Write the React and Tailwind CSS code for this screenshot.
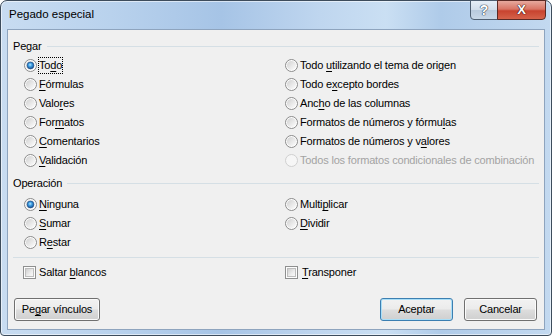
import React from "react";

function Defs() {
  return (
    <svg width="0" height="0" className="block">
      <defs>
        <linearGradient id="rgi" x1="0" y1="0" x2="1" y2="1">
          <stop offset="0" stopColor="#d0d0d0" />
          <stop offset="0.7" stopColor="#f0f0f0" />
          <stop offset="1" stopColor="#fdfdfd" />
        </linearGradient>
        <radialGradient id="rdot" cx="0.45" cy="0.4" r="0.6">
          <stop offset="0" stopColor="#b8e6ff" />
          <stop offset="0.45" stopColor="#3a9be0" />
          <stop offset="1" stopColor="#1a4f8f" />
        </radialGradient>
        <linearGradient id="cg" x1="0" y1="0" x2="1" y2="1">
          <stop offset="0" stopColor="#cbcbcb" />
          <stop offset="0.6" stopColor="#eeeeee" />
          <stop offset="1" stopColor="#fafafa" />
        </linearGradient>
      </defs>
    </svg>
  );
}

function Radio({ checked, disabled }) {
  return (
    <svg width="13" height="13" viewBox="0 0 13 13" className="block shrink-0">
      <circle
        cx="6.5"
        cy="6.5"
        r="6"
        fill={disabled ? "#f6f6f6" : "#fdfdfd"}
        stroke={disabled ? "#cfcfcf" : "#8b8b8b"}
        strokeWidth="1"
      />
      {!disabled && <circle cx="6.5" cy="6.5" r="4.6" fill="url(#rgi)" />}
      {checked && (
        <circle cx="6.5" cy="6.5" r="3.4" fill="url(#rdot)" stroke="#1d4c86" strokeWidth="0.6" />
      )}
    </svg>
  );
}

function Check() {
  return (
    <svg width="13" height="13" viewBox="0 0 13 13" className="block shrink-0">
      <rect x="0.5" y="0.5" width="12" height="12" fill="#fdfdfd" stroke="#8e8f8f" />
      <rect x="2.5" y="2.5" width="8" height="8" fill="url(#cg)" stroke="#bdbdbd" strokeWidth="1" />
    </svg>
  );
}

function Label({ pre = "", u = "", post = "", focus, disabled }) {
  return (
    <span
      className={
        focus
          ? "border border-dotted border-black leading-[15px] whitespace-nowrap"
          : disabled
          ? "border border-transparent leading-[15px] whitespace-nowrap text-[#a3a3a3]"
          : "border border-transparent leading-[15px] whitespace-nowrap"
      }
    >
      {pre}
      {u && <span className="underline decoration-1 underline-offset-[2px]">{u}</span>}
      {post}
    </span>
  );
}

function RadioRow({ checked, disabled, focus, pre, u, post }) {
  return (
    <div className="flex h-[19px] items-center gap-[1px]">
      <Radio checked={checked} disabled={disabled} />
      <Label pre={pre} u={u} post={post} focus={focus} disabled={disabled} />
    </div>
  );
}

function Header({ children }) {
  return (
    <div className="flex h-[18px] items-center px-[5px]">
      <span className="whitespace-nowrap">{children}</span>
      <div className="ml-[5px] h-px flex-1 bg-[#d5dfe5]" />
    </div>
  );
}

function Btn({ children, def, wide }) {
  const base =
    "flex h-[23px] items-center justify-center rounded-[3px] border bg-[linear-gradient(180deg,#f2f2f2_0%,#ebebeb_48%,#dddddd_52%,#cfcfcf_100%)]";
  if (def)
    return (
      <div className={base + " w-[73px] border-[#3c7fb1] shadow-[inset_0_0_0_1px_#a9def7]"}>{children}</div>
    );
  if (wide)
    return (
      <div className={base + " w-[86px] border-[#707070] shadow-[inset_0_0_0_1px_#fbfbfb]"}>{children}</div>
    );
  return (
    <div className={base + " w-[73px] border-[#707070] shadow-[inset_0_0_0_1px_#fbfbfb]"}>{children}</div>
  );
}

export default function App() {
  return (
    <div className="h-[336px] w-[552px] overflow-hidden bg-white font-['Liberation_Sans',Arial,sans-serif] text-[11px] tracking-[-0.17px] text-black">
      <Defs />
      <div className="flex h-[336px] w-[552px] flex-col rounded-t-[7px] rounded-b-[4px] border border-[#3d4c5c] bg-[linear-gradient(90deg,#c8dcf1_0%,#b9d2ed_20%,#a6c4e6_40%,#bfd6ef_58%,#cadff3_70%,#afcbe9_80%,#c3d9f0_100%)] shadow-[inset_0_0_0_1px_rgba(255,255,255,0.55)]">
        {/* title bar */}
        <div className="flex h-[28px] shrink-0 items-start">
          <div className="flex h-[28px] flex-1 items-center pl-[8px] text-[11.5px] tracking-normal">Pegado especial</div>
          <div className="mr-[5px] -mt-px flex h-[20px]">
            <div className="flex w-[28px] items-center justify-center rounded-bl-[4px] border border-[#4f5f72] bg-[linear-gradient(180deg,#e6eef7_0%,#d2deeb_48%,#b9cadd_52%,#c9d8e8_100%)] text-[14px] font-bold text-white [text-shadow:0_0_1px_#2b3a4c,0_0_1px_#2b3a4c,0_0_1px_#2b3a4c]">
              ?
            </div>
            <div className="-ml-px flex w-[49px] items-center justify-center rounded-br-[4px] border border-[#5b2a25] bg-[linear-gradient(180deg,#e7a99e_0%,#d97565_45%,#c8432f_55%,#d5624a_100%)] text-[13px] font-bold text-white [text-shadow:0_0_1px_#3b1a14,0_0_1px_#3b1a14,0_0_1px_#3b1a14]">
              X
            </div>
          </div>
        </div>
        {/* client */}
        <div className="mx-[6px] flex h-[301px] flex-col border border-[#8ea4be] bg-[#f0f0f0]">
          <div className="h-[7px]" />
          <Header>Pegar</Header>
          <div className="mt-[1px] grid grid-cols-[261px_1fr] pl-[16px]">
            <div className="flex flex-col">
              <RadioRow checked focus pre="To" u="d" post="o" />
              <RadioRow u="F" post="órmulas" />
              <RadioRow pre="Valo" u="r" post="es" />
              <RadioRow pre="For" u="m" post="atos" />
              <RadioRow u="C" post="omentarios" />
              <RadioRow u="V" post="alidación" />
            </div>
            <div className="flex flex-col">
              <RadioRow pre="Todo " u="u" post="tilizando el tema de origen" />
              <RadioRow pre="Todo e" u="x" post="cepto bordes" />
              <RadioRow pre="Anc" u="h" post="o de las columnas" />
              <RadioRow pre="Formatos de números y fórmu" u="l" post="as" />
              <RadioRow pre="Formatos de números y v" u="a" post="lores" />
              <RadioRow disabled pre="Todos los formatos condicionales de combinación" />
            </div>
          </div>
          <div className="h-[4px]" />
          <Header>Operación</Header>
          <div className="mt-[3px] grid grid-cols-[261px_1fr] pl-[16px]">
            <div className="flex flex-col">
              <RadioRow checked u="N" post="inguna" />
              <RadioRow u="S" post="umar" />
              <RadioRow pre="R" u="e" post="star" />
            </div>
            <div className="flex flex-col">
              <RadioRow pre="Multi" u="p" post="licar" />
              <RadioRow u="D" post="ividir" />
            </div>
          </div>
          <div className="mx-[5px] mt-[5px] h-px bg-[#d5dfe5]" />
          <div className="mt-[5px] grid h-[19px] grid-cols-[262px_1fr] pl-[15px]">
            <div className="flex items-center gap-[2px]">
              <Check />
              <Label pre="Saltar " u="b" post="lancos" />
            </div>
            <div className="flex items-center gap-[3px]">
              <Check />
              <Label u="T" post="ransponer" />
            </div>
          </div>
          <div className="mt-[16px] flex items-center pl-[6px] pr-[7px]">
            <Btn wide>
              <span>
                Pe<span className="underline decoration-1 underline-offset-[2px]">g</span>ar vínculos
              </span>
            </Btn>
            <div className="flex-1" />
            <Btn def>Aceptar</Btn>
            <div className="w-[11px]" />
            <Btn>Cancelar</Btn>
          </div>
        </div>
      </div>
    </div>
  );
}
